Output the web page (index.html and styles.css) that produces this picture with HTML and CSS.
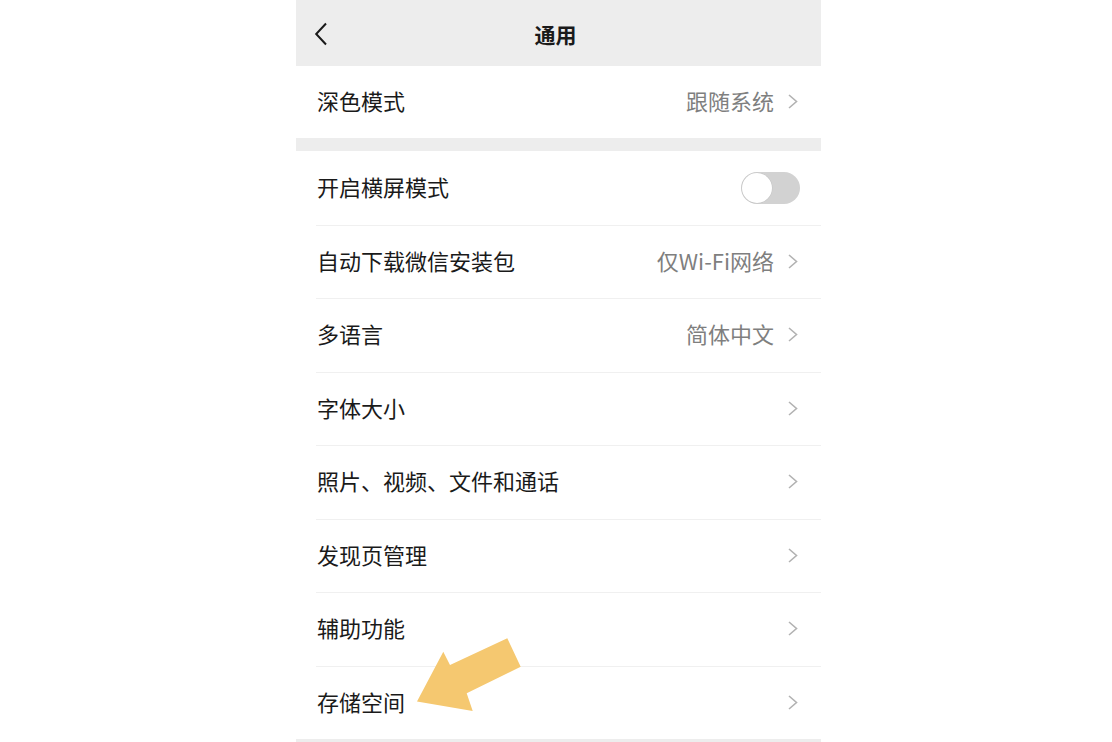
FILE: index.html
```html
<!DOCTYPE html>
<html lang="zh-CN">
<head>
<meta charset="utf-8">
<title>通用</title>
<link rel="stylesheet" href="styles.css">
</head>
<body>
<div class="phone">
  <header class="nav">
    <svg class="back" width="14" height="24" viewBox="0 0 14 24"><path d="M12 1.5 L2.2 12 L12 22.5" fill="none" stroke="#1a1a1a" stroke-width="2"/></svg>
    <div class="title">通用</div>
  </header>
  <section class="group first">
    <div class="row"><span class="label">深色模式</span><span class="value">跟随系统</span><svg class="chev" width="10" height="15" viewBox="0 0 10 15"><path d="M1 1 L8.5 7.5 L1 14" fill="none" stroke="#b2b2b2" stroke-width="1.6"/></svg></div>
  </section>
  <section class="group">
    <div class="row"><span class="label">开启横屏模式</span><span class="toggle"><span class="knob"></span></span></div>
    <div class="row"><span class="label">自动下载微信安装包</span><span class="value">仅Wi-Fi网络</span><svg class="chev" width="10" height="15" viewBox="0 0 10 15"><path d="M1 1 L8.5 7.5 L1 14" fill="none" stroke="#b2b2b2" stroke-width="1.6"/></svg></div>
    <div class="row"><span class="label">多语言</span><span class="value">简体中文</span><svg class="chev" width="10" height="15" viewBox="0 0 10 15"><path d="M1 1 L8.5 7.5 L1 14" fill="none" stroke="#b2b2b2" stroke-width="1.6"/></svg></div>
    <div class="row"><span class="label">字体大小</span><svg class="chev" width="10" height="15" viewBox="0 0 10 15"><path d="M1 1 L8.5 7.5 L1 14" fill="none" stroke="#b2b2b2" stroke-width="1.6"/></svg></div>
    <div class="row"><span class="label">照片、视频、文件和通话</span><svg class="chev" width="10" height="15" viewBox="0 0 10 15"><path d="M1 1 L8.5 7.5 L1 14" fill="none" stroke="#b2b2b2" stroke-width="1.6"/></svg></div>
    <div class="row"><span class="label">发现页管理</span><svg class="chev" width="10" height="15" viewBox="0 0 10 15"><path d="M1 1 L8.5 7.5 L1 14" fill="none" stroke="#b2b2b2" stroke-width="1.6"/></svg></div>
    <div class="row"><span class="label">辅助功能</span><svg class="chev" width="10" height="15" viewBox="0 0 10 15"><path d="M1 1 L8.5 7.5 L1 14" fill="none" stroke="#b2b2b2" stroke-width="1.6"/></svg></div>
    <div class="row"><span class="label">存储空间</span><svg class="chev" width="10" height="15" viewBox="0 0 10 15"><path d="M1 1 L8.5 7.5 L1 14" fill="none" stroke="#b2b2b2" stroke-width="1.6"/></svg></div>
  </section>
</div>
<svg class="arrow" width="1112" height="742" viewBox="0 0 1112 742"><polygon points="417,701.5 443.3,651.7 450,665 507.3,638.3 520.7,666.7 466.7,693.3 472.7,711" fill="#f5c870"/></svg>
</body>
</html>
```

FILE: styles.css
```css
html, body {
  margin: 0;
  padding: 0;
  background: #ffffff;
  width: 1112px;
  height: 742px;
  overflow: hidden;
  font-family: "Noto Sans CJK SC", "Noto Sans", sans-serif;
}
.phone {
  margin-left: 296px;
  width: 525px;
  height: 742px;
  background: #ededed;
  display: flex;
  flex-direction: column;
}
.nav {
  height: 66px;
  flex: none;
  display: flex;
  align-items: center;
  position: relative;
  background: #ededed;
}
.back {
  margin-left: 18px;
  margin-top: 2px;
}
.title {
  position: absolute;
  left: 0;
  right: 0;
  top: 0;
  bottom: 0;
  display: flex;
  align-items: center;
  justify-content: center;
  font-size: 21px;
  font-weight: 700;
  color: #1a1a1a;
  padding-right: 6px;
  margin-top: 1px;
  pointer-events: none;
}
.group {
  background: #ffffff;
  padding-left: 20px;
}
.group.first {
  margin-bottom: 13px;
}
.row {
  height: 73.5px;
  box-sizing: border-box;
  display: flex;
  align-items: center;
  padding-right: 23px;
  border-top: 1px solid #f0f0f0;
  font-size: 22px;
  color: #1a1a1a;
}
.group.first .row {
  height: 72px;
}
.row:first-child {
  border-top: none;
}
.label {
  flex: 1;
  padding-left: 1px;
  margin-bottom: 4px;
}
.value {
  color: #7f7f7f;
  margin-right: 14px;
  margin-bottom: 4px;
}
.chev {
  flex: none;
  margin-top: -1px;
}
.toggle {
  width: 59px;
  height: 32px;
  border-radius: 16px;
  background: #d2d2d2;
  position: relative;
  box-sizing: border-box;
  margin-right: -2px;
}
.knob {
  position: absolute;
  left: 1px;
  top: 1px;
  width: 30px;
  height: 30px;
  border-radius: 50%;
  background: #ffffff;
  box-shadow: 0 0 0 0.5px #c4c4c4;
}
.arrow {
  position: absolute;
  left: 0;
  top: 0;
  pointer-events: none;
}
```
